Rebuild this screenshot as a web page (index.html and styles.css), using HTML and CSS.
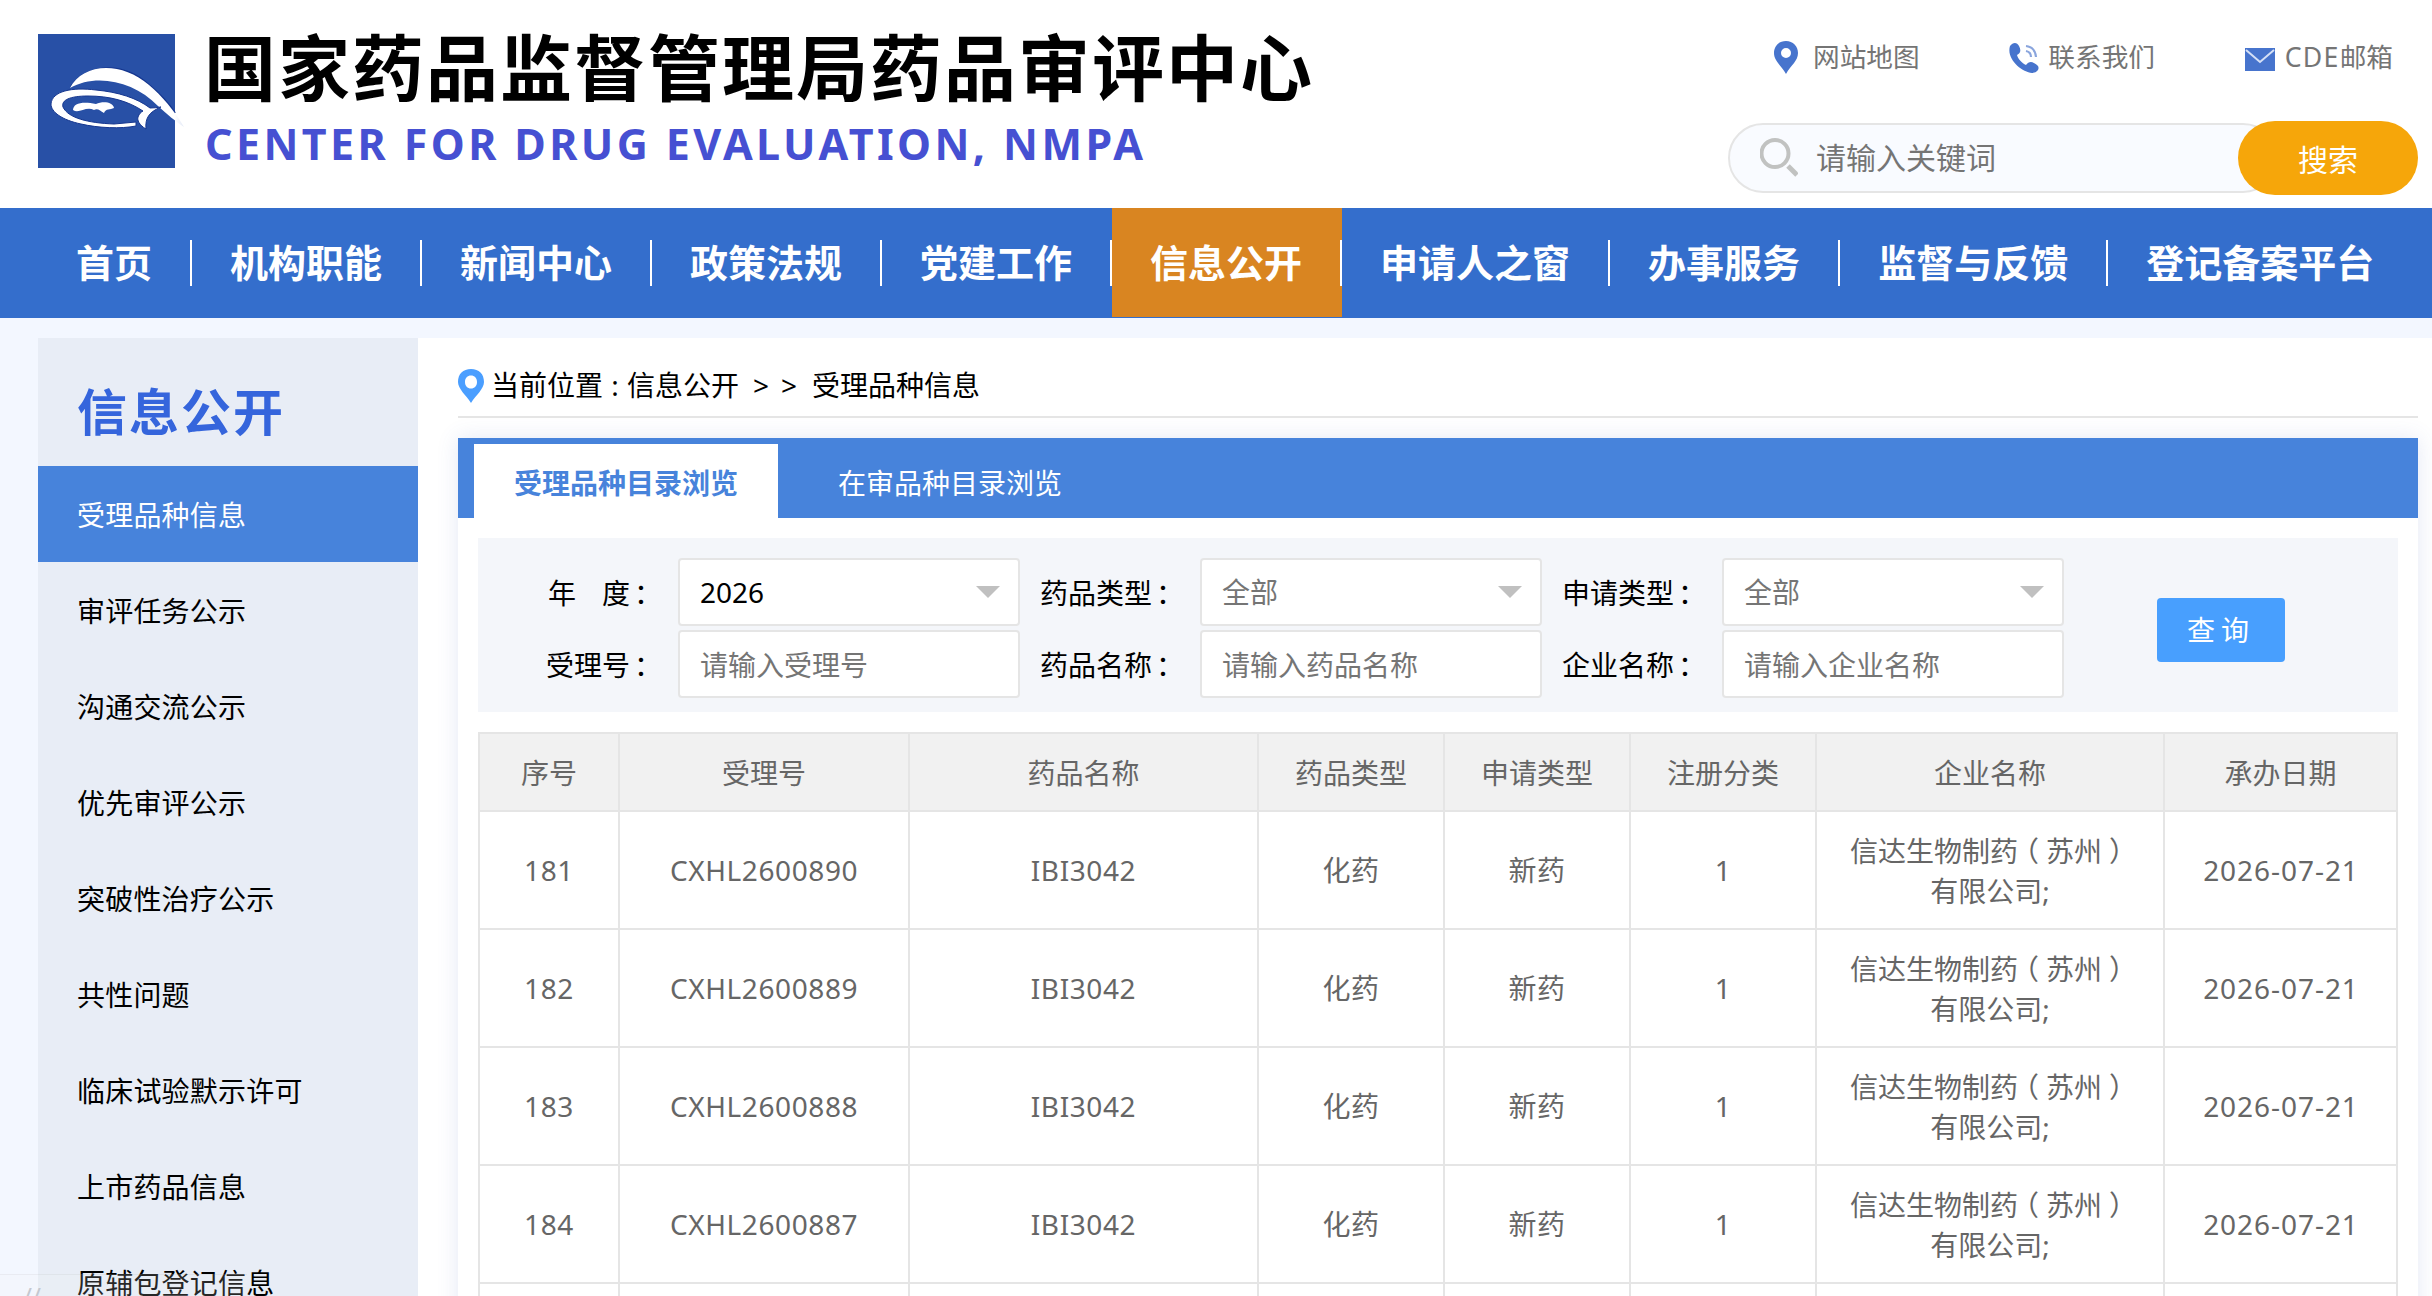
FILE: index.html
```html
<!DOCTYPE html>
<html lang="zh-CN">
<head>
  <meta charset="UTF-8">
  <meta name="viewport" content="width=device-width, initial-scale=1.0">
  <title>国家药品监督管理局药品审评中心</title>
  <link rel="stylesheet" href="styles.css">
</head>
<body>
  <header class="header">
    <a class="logo" href="#">
      <svg class="logo-img" width="148" height="134" viewBox="0 0 148 134">
        <defs>
          <linearGradient id="tail" x1="30" x2="146" y1="0" y2="0" gradientUnits="userSpaceOnUse">
            <stop offset="0.92" stop-color="#fff"/>
            <stop offset="1" stop-color="#e3e9f6"/>
          </linearGradient>
        </defs>
        <rect width="137" height="134" fill="#2850a6"/>
        <path d="M33 53C46 32 82 25 111 51C123 61 131 70 137 79" fill="none" stroke="#15368f" stroke-width="2"/>
        <path d="M32 54C44 30 82 26 111 51C124 62 136 76 146 93C137 87 130 81 120 72C96 47 58 39 32 54Z" fill="url(#tail)"/>
        <path fill-rule="evenodd" d="M13 70C14 57 34 53 58 56C80 58 99 64 112 74Q117 74 123 73C111 78 107 84 108 95C101 91 99 86 100 83C101 80 103 78 105 77C90 67 72 62 50 62C32 62 23 66 25 73C30 84 50 89 76 90L98 88L98 92C83 95 60 94 43 90C24 86 13 78 13 70Z" fill="#fff" stroke="#15368f" stroke-width="1"/>
        <path d="M35 76C35 69 45 67 58 70C65 67 75 68 76 74C72 76 68 74 66 79C62 77 60 74 56 76C48 72 41 80 35 76Z" fill="#fff"/>
      </svg>
      <span class="logo-text">
        <span class="logo-cn">国家药品监督管理局药品审评中心</span>
        <span class="logo-en">CENTER FOR DRUG EVALUATION, NMPA</span>
      </span>
    </a>

    <div class="header-right">
      <ul class="quick-links">
        <li>
          <svg class="icon-pin" width="26" height="33" viewBox="0 0 26 33"><path fill-rule="evenodd" d="M13 0C20 0 25 5 25 12C25 20 18 24 13 33C8 24 1 20 1 12C1 5 6 0 13 0ZM13 7A5 5 0 1 0 13 17A5 5 0 1 0 13 7Z" fill="#4774cd"/></svg>
          <a href="#">网站地图</a>
        </li>
        <li>
          <svg class="icon-phone" width="30" height="30" viewBox="0 0 30 30">
            <path d="M1 3C4 -1 8 -1 10 3C12 7 12 10 8 12C9 16 13 20 17 22C20 18 24 18 29 23C31 27 27 30 23 30C13 29 -3 16 1 3Z" fill="#4774cd"/>
            <path d="M17 3Q26 4 27 14M17 8Q22 9 22 14" fill="none" stroke="#8aa5dd" stroke-width="2.2"/>
          </svg>
          <a href="#">联系我们</a>
        </li>
        <li>
          <svg class="icon-mail" width="30" height="23" viewBox="0 0 30 23"><rect width="30" height="23" fill="#4774cd"/><path d="M1 2L15 14L29 2" fill="none" stroke="#d5e0f6" stroke-width="2"/></svg>
          <a href="#"><span class="latin">CDE</span>邮箱</a>
        </li>
      </ul>
      <form class="search">
        <div class="search-box">
          <svg width="38" height="39" viewBox="0 0 38 39"><circle cx="15" cy="15.500" r="13.500" fill="none" stroke="#c1c2c1" stroke-width="4"/><path d="M28 28L37 37" stroke="#c1c2c1" stroke-width="5"/></svg>
          <input type="text" placeholder="请输入关键词">
        </div>
        <button type="button" class="search-btn">搜索</button>
      </form>
    </div>
  </header>

  <nav class="nav">
    <a href="#">首页</a>
    <a href="#">机构职能</a>
    <a href="#">新闻中心</a>
    <a href="#">政策法规</a>
    <a href="#">党建工作</a>
    <a href="#" class="active">信息公开</a>
    <a href="#">申请人之窗</a>
    <a href="#">办事服务</a>
    <a href="#">监督与反馈</a>
    <a href="#">登记备案平台</a>
  </nav>

  <div class="container">
    <aside class="sidebar">
      <h2>信息公开</h2>
      <ul>
        <li class="active">受理品种信息</li>
        <li>审评任务公示</li>
        <li>沟通交流公示</li>
        <li>优先审评公示</li>
        <li>突破性治疗公示</li>
        <li>共性问题</li>
        <li>临床试验默示许可</li>
        <li>上市药品信息</li>
        <li>原辅包登记信息</li>
      </ul>
    </aside>

    <main class="main">
      <div class="breadcrumb">
        <svg width="26" height="34" viewBox="0 0 26 34"><path fill-rule="evenodd" d="M13 0C21 0 26 5 26 13C26 20 18 26 13 34C8 26 0 20 0 13C0 5 5 0 13 0ZM13 6.500C9.500 6.500 7 9 7 13C7 17 9.500 19.500 13 19.500C16.500 19.500 19 17 19 13C19 9 16.500 6.500 13 6.500Z" fill="#4a9eff"/></svg>
        <span>当前位置</span><span class="sep">:</span><span>信息公开</span><span class="arrow first">&gt;</span><span class="arrow">&gt;</span><span class="current">受理品种信息</span>
      </div>

      <div class="panel">
        <div class="tabs">
          <a href="#" class="active">受理品种目录浏览</a>
          <a href="#">在审品种目录浏览</a>
        </div>

        <form class="filter">
          <div class="filter-fields">
            <div class="field">
              <label>年<i class="gap"></i>度<span class="punct">：</span></label>
              <div class="select"><span>2026</span></div>
            </div>
            <div class="field">
              <label>药品类型<span class="punct">：</span></label>
              <div class="select empty"><span>全部</span></div>
            </div>
            <div class="field">
              <label>申请类型<span class="punct">：</span></label>
              <div class="select empty"><span>全部</span></div>
            </div>
            <div class="field">
              <label>受理号<span class="punct">：</span></label>
              <input type="text" placeholder="请输入受理号">
            </div>
            <div class="field">
              <label>药品名称<span class="punct">：</span></label>
              <input type="text" placeholder="请输入药品名称">
            </div>
            <div class="field">
              <label>企业名称<span class="punct">：</span></label>
              <input type="text" placeholder="请输入企业名称">
            </div>
          </div>
          <button type="button" class="query-btn">查询</button>
        </form>

        <table class="list">
          <colgroup>
            <col class="c-no"><col class="c-code"><col class="c-name"><col class="c-type"><col class="c-type"><col class="c-type"><col class="c-company"><col class="c-date">
          </colgroup>
          <thead>
            <tr>
              <th>序号</th>
              <th>受理号</th>
              <th>药品名称</th>
              <th>药品类型</th>
              <th>申请类型</th>
              <th>注册分类</th>
              <th>企业名称</th>
              <th>承办日期</th>
            </tr>
          </thead>
          <tbody>
            <tr>
              <td>181</td>
              <td>CXHL2600890</td>
              <td>IBI3042</td>
              <td>化药</td>
              <td>新药</td>
              <td>1</td>
              <td class="company">信达生物制药<span class="punct">（</span>苏州<span class="punct">）</span><br>有限公司;</td>
              <td class="date">2026-07-21</td>
            </tr>
            <tr>
              <td>182</td>
              <td>CXHL2600889</td>
              <td>IBI3042</td>
              <td>化药</td>
              <td>新药</td>
              <td>1</td>
              <td class="company">信达生物制药<span class="punct">（</span>苏州<span class="punct">）</span><br>有限公司;</td>
              <td class="date">2026-07-21</td>
            </tr>
            <tr>
              <td>183</td>
              <td>CXHL2600888</td>
              <td>IBI3042</td>
              <td>化药</td>
              <td>新药</td>
              <td>1</td>
              <td class="company">信达生物制药<span class="punct">（</span>苏州<span class="punct">）</span><br>有限公司;</td>
              <td class="date">2026-07-21</td>
            </tr>
            <tr>
              <td>184</td>
              <td>CXHL2600887</td>
              <td>IBI3042</td>
              <td>化药</td>
              <td>新药</td>
              <td>1</td>
              <td class="company">信达生物制药<span class="punct">（</span>苏州<span class="punct">）</span><br>有限公司;</td>
              <td class="date">2026-07-21</td>
            </tr>
            <tr>
              <td></td><td></td><td></td><td></td><td></td><td></td><td></td><td></td>
            </tr>
          </tbody>
        </table>
      </div>
    </main>
  </div>

  <div class="status-tip">//</div>
</body>
</html>
```

FILE: styles.css
```css
* {
  box-sizing: border-box;
  margin: 0;
  padding: 0;
}
body {
  font-family: "Noto Sans", "Noto Sans CJK SC", sans-serif;
  font-size: 28px;
  line-height: 40px;
  color: #000;
  background: #f3f7ff;
  height: 1296px;
  overflow: hidden;
}
a {
  color: inherit;
  text-decoration: none;
}
ul {
  list-style: none;
}
input, button {
  font-family: inherit;
  border: none;
  outline: none;
}
input::placeholder {
  color: #757575;
  opacity: 1;
}

/* header */
.header {
  display: flex;
  justify-content: space-between;
  height: 208px;
  padding: 0 14px 0 38px;
  background: #fff;
}
.logo {
  display: flex;
}
.logo-img {
  margin-top: 34px;
}
.logo-text {
  display: flex;
  flex-direction: column;
  margin-left: 18px;
  white-space: nowrap;
}
.logo-cn {
  margin-top: 17px;
  font-size: 72px;
  line-height: 100px;
  letter-spacing: 2px;
  font-weight: 700;
}
.logo-en {
  margin: 1px 0 0 1px;
  color: #4650d2;
  font-size: 43px;
  line-height: 52px;
  letter-spacing: 3.4px;
  font-weight: 700;
}
.header-right {
  width: 690px;
}
.quick-links {
  display: flex;
  justify-content: space-between;
  height: 121px;
  padding: 37px 25px 0 45px;
  font-size: 26.67px;
  color: #757575;
}
.quick-links li {
  display: flex;
  align-items: flex-start;
}
.quick-links svg {
  margin-top: 6px;
}
.icon-pin {
  margin-right: 14px;
}
.quick-links .icon-pin {
  margin-top: 4px;
}
.icon-phone {
  margin-right: 9px;
}
.icon-mail {
  margin-right: 10px;
}
.quick-links .icon-mail {
  margin-top: 11px;
}
.quick-links .latin {
  letter-spacing: 1.3px;
}
.search {
  display: flex;
  align-items: center;
}
.search-box {
  flex: 1;
  display: flex;
  align-items: center;
  height: 70px;
  margin-right: -40px;
  padding: 0 50px 2px 30px;
  border: 2px solid #e5e5e5;
  border-radius: 35px;
  background: #f9fbff;
}
.search-box input {
  width: 300px;
  margin-left: 18px;
  font-size: 30px;
  background: transparent;
}
.search-btn {
  position: relative;
  width: 180px;
  height: 74px;
  padding-bottom: 1px;
  border-radius: 37px;
  background: #f6a60a;
  color: #fff;
  font-size: 30px;
}

/* nav */
.nav {
  display: flex;
  height: 110px;
  padding-left: 38px;
  background: #346ecc;
  color: #fff;
  font-size: 38px;
  font-weight: 700;
}
.nav a {
  display: flex;
  align-items: center;
  height: 109px;
  padding: 0 0 2px 38px;
  white-space: nowrap;
}
.nav a::after {
  content: "";
  width: 2px;
  height: 46px;
  margin: 2px 0 0 38px;
  background: #fff;
}
.nav a:last-child::after {
  display: none;
}
.nav a.active {
  background: #d98521;
}

/* layout */
.container {
  display: flex;
  height: 958px;
  margin: 20px 0 0 38px;
  background: #fff;
  overflow: hidden;
}
.sidebar {
  width: 380px;
  background: #e8edf6;
}
.sidebar h2 {
  height: 128px;
  padding: 12px 0 0 39px;
  color: #3565dc;
  font-size: 50px;
  line-height: 124px;
  letter-spacing: 2px;
}
.sidebar li {
  height: 96px;
  padding-left: 39px;
  line-height: 98px;
  letter-spacing: 0.2px;
}
.sidebar li.active {
  background: #4783db;
  color: #fff;
}
.main {
  width: 1960px;
  margin-left: 40px;
}
.breadcrumb {
  display: flex;
  align-items: center;
  height: 80px;
  padding-top: 15px;
  border-bottom: 2px solid #e5e5e5;
}
.breadcrumb svg {
  margin: 2px 7px 0 0;
}
.breadcrumb .sep {
  width: 24px;
  text-align: center;
}
.breadcrumb .arrow {
  width: 28px;
  text-align: center;
}
.breadcrumb .first {
  margin-left: 8px;
}
.breadcrumb .current {
  margin-left: 9px;
}

/* panel */
.panel {
  height: 900px;
  margin-top: 20px;
  background: #fff;
  box-shadow: 0 0 20px rgba(71, 100, 190, 0.15);
}
.tabs {
  display: flex;
  gap: 20px;
  height: 80px;
  padding: 6px 0 0 16px;
  background: #4783db;
  color: #fff;
}
.tabs a {
  height: 74px;
  padding: 0 40px;
  line-height: 78px;
}
.tabs a.active {
  background: #fff;
  color: #4783db;
  font-weight: 700;
}
.filter {
  display: flex;
  align-items: center;
  height: 174px;
  margin: 20px;
  padding: 0 0 0 20px;
  background: #f4f6fa;
}
.filter-fields {
  display: flex;
  flex-wrap: wrap;
  row-gap: 4px;
  width: 1566px;
  margin-top: 6px;
}
.field {
  display: flex;
  align-items: center;
  width: 522px;
  height: 68px;
}
.field label {
  width: 180px;
  padding-right: 20px;
  text-align: right;
  white-space: nowrap;
}
.gap {
  display: inline-block;
  width: 26px;
}
/* full-width punctuation, centred in its em box */
.punct {
  font-family: "Noto Sans CJK SC", sans-serif;
  font-feature-settings: "halt";
  padding: 0 0.25em;
}
.field .punct {
  padding: 0 0.36em 0 0.14em;
}
.field input,
.select {
  width: 342px;
  height: 68px;
  padding: 0 18px 0 20px;
  border: 2px solid #e5e5e5;
  border-radius: 4px;
  background: #fff;
  font-size: 28px;
}
.field input {
  padding-top: 2px;
}
.select {
  display: flex;
  align-items: center;
  justify-content: space-between;
}
.select.empty {
  color: #757575;
}
.select::after {
  content: "";
  margin-top: -1px;
  border: 12px solid transparent;
  border-top-color: #c0c0c0;
  border-bottom: none;
}
.query-btn {
  width: 128px;
  height: 64px;
  margin: 10px 0 0 93px;
  padding-bottom: 2px;
  border-radius: 4px;
  background: #489ffe;
  color: #fff;
  font-size: 28px;
  letter-spacing: 6px;
}

/* table */
.list {
  width: 1920px;
  margin: 0 20px;
  table-layout: fixed;
  border-collapse: collapse;
  color: #666;
  text-align: center;
}
.list th, .list td {
  border: 2px solid #e5e5e5;
  white-space: nowrap;
}
.list th {
  height: 78px;
  padding-top: 2px;
  background: #f1f1f1;
  font-weight: 400;
}
.list td {
  height: 118px;
  letter-spacing: 0.6px;
}
.list td.company {
  letter-spacing: 0;
}
.list td.date {
  padding-left: 1px;
  letter-spacing: 0.95px;
}
.c-no { width: 140px; }
.c-code { width: 290px; }
.c-name { width: 349px; }
.c-type { width: 186px; }
.c-company { width: 348px; }
.c-date { width: 233px; }

.status-tip {
  position: absolute;
  left: 0;
  bottom: 0;
  width: 247px;
  height: 22px;
  padding: 9px 0 0 23px;
  overflow: hidden;
  border-top: 1px solid rgba(120, 120, 120, 0.08);
  background: rgba(245, 245, 240, 0.16);
  color: #c4c8d0;
  font-size: 24px;
  line-height: 24px;
}
```
